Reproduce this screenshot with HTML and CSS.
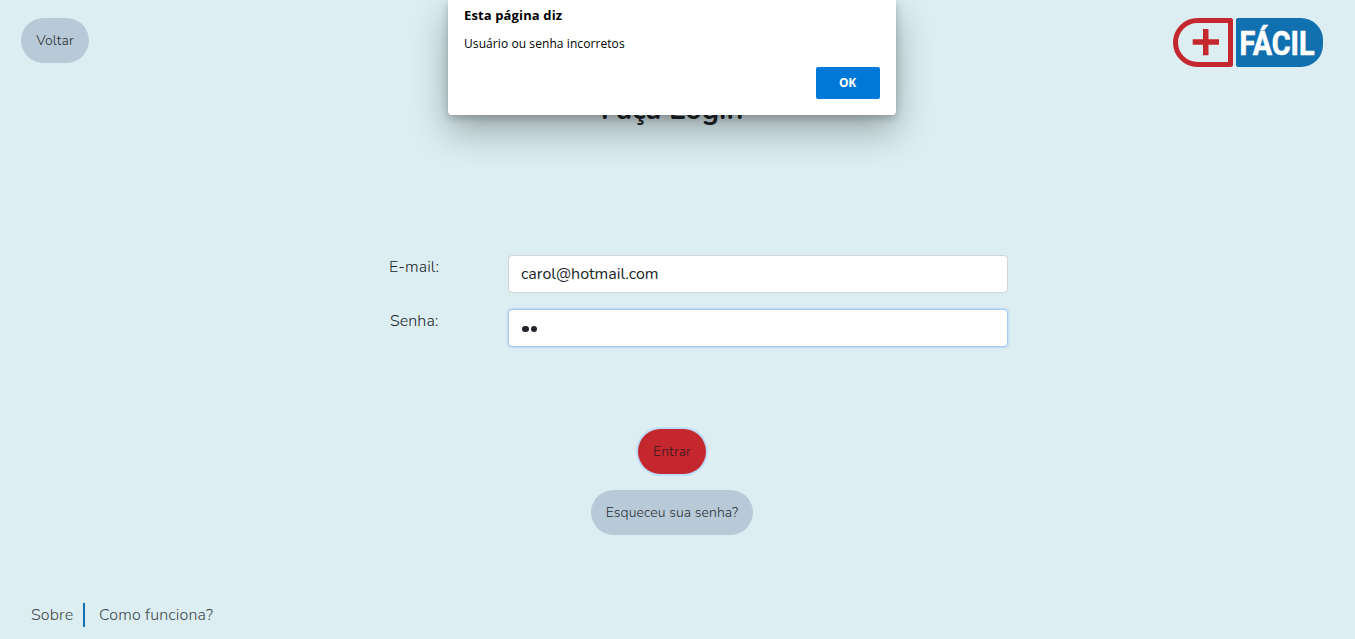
FILE: index.html
```html
<!DOCTYPE html>
<html lang="pt-BR">
<head>
<meta charset="utf-8">
<title>Mais Fácil - Login</title>
<link rel="stylesheet" href="styles.css">
</head>
<body>
<div class="page">
  <header class="header">
    <a class="pill back"><span>Voltar</span></a>
    <svg class="logo" width="150" height="49" viewBox="0 0 150 49" role="img">
      <path d="M24.5 2.5H57.5V46.5H24.5A22 22 0 0 1 24.5 2.5Z" fill="none" stroke="#c4272e" stroke-width="5" stroke-linejoin="round"/>
      <path d="M30 11h5.5v10.300h10.500v5.500h-10.500v10.500h-5.500v-10.500h-10.300v-5.500h10.300z" fill="#c4272e"/>
      <path d="M65 0H128A22 22 0 0 1 150 22V27A22 22 0 0 1 128 49H65Q63 49 63 47V2Q63 0 65 0Z" fill="#1170b0"/>
      <text class="logo-text" x="66.5" y="37" textLength="75" lengthAdjust="spacingAndGlyphs">FÁCIL</text>
    </svg>
  </header>
  <main class="main">
    <h1 class="title"><span>Faça Login</span></h1>
    <form class="form">
      <label class="label" for="email"><span class="t-email">E-mail:</span></label>
      <input class="field" id="email" type="text" value="carol@hotmail.com">
      <label class="label" for="senha"><span class="t-senha">Senha:</span></label>
      <div class="field field-focus" id="senha"><i class="dot"></i><i class="dot"></i></div>
    </form>
    <a class="pill enter"><span>Entrar</span></a>
    <a class="pill forgot"><span>Esqueceu sua senha?</span></a>
  </main>
  <footer class="footer">
    <a class="about"><span>Sobre</span></a>
    <a class="how"><span>Como funciona?</span></a>
  </footer>
</div>
<div class="dialog">
  <div class="dialog-title"><span>Esta página diz</span></div>
  <div class="dialog-text"><span>Usuário ou senha incorretos</span></div>
  <button class="ok" type="button">OK</button>
</div>
</body>
</html>
```
FILE: styles.css
```css
* { box-sizing: border-box; }
body {
  margin: 0;
  background: #dceef2;
  color: #212529;
  font: 300 16px/24px Nunito, "Open Sans", sans-serif;
}
.page { display: flex; flex-direction: column; height: 639px; }
.header {
  display: flex;
  justify-content: space-between;
  align-items: flex-start;
  padding: 18px 32px 0 21px;
  height: 67px;
}
.logo { display: block; overflow: visible; }
.logo-text {
  font: 700 33px Roboto, sans-serif;
  fill: #fff;
  stroke: #fff;
  stroke-width: .6px;
}
.pill {
  display: flex;
  align-items: center;
  justify-content: center;
  height: 45px;
  border-radius: 23px;
  background: #b8cad8;
  color: #2b2f33;
  font-size: 14px;
  letter-spacing: .08px;
  white-space: nowrap;
}
.back { width: 68px; }
.main {
  display: flex;
  flex-direction: column;
  align-items: center;
  padding-right: 11px;
}
.title {
  margin: 24px 0 0;
  height: 38px;
  font: 700 28.8px/38px Nunito, "Open Sans", sans-serif;
}
.form {
  display: grid;
  grid-template-columns: 118px 500px;
  row-gap: 16px;
  margin: 126px 0 0 54px;
}
.label { height: 38px; margin-left: -1px; letter-spacing: .08px; }
.t-senha { margin-left: 1px; }
.field {
  width: 500px;
  height: 38px;
  padding: 6px 12px;
  border: 1px solid #ced4da;
  border-radius: 4px;
  background: #fff;
  color: #212529;
  font: 400 16px/24px Nunito, "Open Sans", sans-serif;
}
.field-focus {
  display: flex;
  align-items: center;
  gap: 2px;
  padding: 2px 13px 0;
  border-color: #a9c8ed;
  box-shadow: 0 0 0 1.5px #c8e0f3;
}
.dot { width: 6.5px; height: 6.5px; border-radius: 50%; background: #212529; }
.enter {
  width: 68px;
  margin-top: 82px;
  background: #c4272e;
  color: #33191e;
  box-shadow: 0 0 0 2px #bfdcf7;
}
.forgot { width: 162px; margin-top: 16px; }
.footer {
  display: flex;
  align-items: center;
  margin: auto 0 12px 31px;
  color: #40474b;
  letter-spacing: .15px;
}
.about { width: 54px; height: 24px; border-right: 2px solid #1170b0; white-space: nowrap; }
.how { margin-left: 14px; }
.dialog {
  position: absolute;
  top: 0;
  left: 448px;
  display: flex;
  flex-direction: column;
  width: 448px;
  height: 115px;
  padding: 5px 16px 16px;
  border-radius: 0 0 4px 4px;
  background: #fff;
  color: #000;
  font: 400 12px/20px "Segoe UI", "Open Sans", sans-serif;
  box-shadow: 0 16px 36px rgba(0, 0, 0, .3), 0 3px 9px rgba(0, 0, 0, .22);
}
.dialog-title { font-weight: 700; font-size: 13px; letter-spacing: .13px; }
.dialog-text { margin-top: 9px; letter-spacing: .08px; }
.ok {
  align-self: flex-end;
  width: 64px;
  height: 32px;
  margin-top: auto;
  padding: 0 1px 0 0;
  border: 0;
  border-radius: 2px;
  background: #0078d7;
  color: #fff;
  font: 700 12px/32px "Segoe UI", "Open Sans", sans-serif;
  letter-spacing: -.3px;
}
```
